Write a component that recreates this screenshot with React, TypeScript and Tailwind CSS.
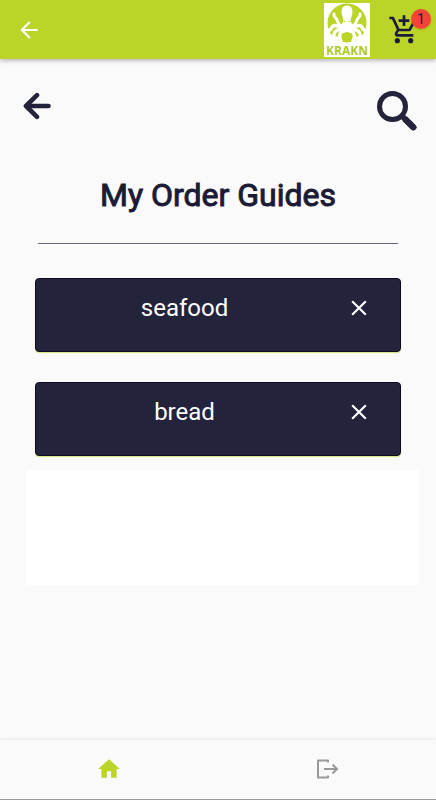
import { useState } from "react";
import { MdAddShoppingCart, MdArrowBack, MdClose, MdHome } from "react-icons/md";

const KraknLogo = () => (
  <div className="flex h-[54px] w-[46px] flex-col items-center bg-white">
    <svg viewBox="0 0 46 42" className="h-[42px] w-full" aria-hidden="true">
      <circle cx="23" cy="20" r="19.5" fill="#bbd427" />
      <g fill="none" stroke="#fff" strokeLinecap="round" strokeLinejoin="round">
        <path strokeWidth="3" d="M20 23C15 23 14 20 13 17C12 14 9 14 10 11" />
        <path strokeWidth="3" d="M26 23C31 23 32 20 33 17C34 14 37 14 36 11" />
        <path strokeWidth="3.4" d="M20 24C15 25 12 21 9 23C7 25 7 28 3 28" />
        <path strokeWidth="3.4" d="M26 24C31 25 34 21 37 23C39 25 39 28 43 28" />
        <path strokeWidth="3.4" d="M20 26C15 26 11 27 10 31C9 34 11 36 14 35" />
        <path strokeWidth="3.4" d="M26 26C31 26 35 27 36 31C37 34 35 36 32 35" />
        <path strokeWidth="3.4" d="M20 27C16 29 14 33 17 38" />
        <path strokeWidth="3.4" d="M26 27C30 29 32 33 29 38" />
      </g>
      <path
        fill="#fff"
        d="M23 2.500C19 2.500 17.500 5.500 17.500 9C17.500 12.500 19.500 15 19.500 18C18 21 16 24 17 30C19 31 21 29 23 29C25 29 27 31 29 30C30 24 28 21 26.500 18C26.500 15 28.500 12.500 28.500 9C28.500 5.500 27 2.500 23 2.500Z"
      />
      <circle cx="20.800" cy="18.500" r="0.800" fill="#bbd427" />
      <circle cx="25.200" cy="18.500" r="0.800" fill="#bbd427" />
    </svg>
    <span className="font-['Open_Sans',sans-serif] text-[12px] leading-[12px] font-bold text-[#b0ca24]">KRAKN</span>
  </div>
);

const BackIcon = () => (
  <svg viewBox="0 0 28 28" className="size-7" fill="none" stroke="#23233b" strokeWidth="4.6" strokeLinejoin="round" aria-hidden="true">
    <path strokeLinecap="round" d="M4 14H25.500" />
    <path strokeLinecap="round" d="M14 3.200L3 14L14 24.800" />
  </svg>
);

const SearchIcon = () => (
  <svg viewBox="0 0 40 40" className="size-10" fill="none" stroke="#23233b" aria-hidden="true">
    <circle cx="15.5" cy="15.5" r="13" strokeWidth="5" />
    <path d="M24 24L36.300 36.300" strokeWidth="5.500" />
    <path d="M29 29L36.300 36.300" strokeWidth="6.400" strokeLinecap="round" />
  </svg>
);

const LogoutIcon = () => (
  <svg viewBox="0 0 24 24" className="size-6" fill="none" stroke="currentColor" strokeWidth="2" aria-hidden="true">
    <path strokeLinejoin="round" d="M13 5.500V3.500H3V20.500H13V18.500" />
    <path d="M9 12H22M17.500 7.500L22 12L17.500 16.500" />
  </svg>
);

const App = () => {
  const [guides, setGuides] = useState(["seafood", "bread"]);

  const removeGuide = (name: string) => {
    setGuides(guides.filter((guide) => guide !== name));
  };

  return (
    <div className="flex min-h-screen flex-col bg-[#fafafa] font-[Roboto,sans-serif] text-[#23233b]">
      <header className="flex h-[59px] items-center bg-[#bbd427] px-4 shadow-[0_2px_4px_rgba(0,0,0,0.25)]">
        <button aria-label="Back" className="text-white">
          <MdArrowBack size={26} />
        </button>
        <div className="ml-auto">
          <KraknLogo />
        </div>
        <button aria-label="Cart" className="relative ml-[18px] text-[#1c1b3a]">
          <MdAddShoppingCart size={32} />
          <span className="absolute -top-[5px] -right-[11px] flex size-5 items-center justify-center rounded-full bg-[#f44336] text-sm text-[#1c1b3a] shadow">
            1
          </span>
        </button>
      </header>

      <main className="flex-1">
        <div className="flex items-start justify-between pt-8 pr-[19px] pl-[23px]">
          <button aria-label="Previous page" className="pt-px">
            <BackIcon />
          </button>
          <button aria-label="Search">
            <SearchIcon />
          </button>
        </div>

        <h1 className="mt-11 text-center text-[32px] leading-10 font-normal text-[#1c1b35] [-webkit-text-stroke:1px_#1c1b35]">
          My Order Guides
        </h1>
        <hr className="mx-[38px] mt-7 border-[#66667a]" />

        <ul className="mx-[35px] mt-[34px] flex flex-col gap-[30px]">
          {guides.map((guide) => (
            <li
              key={guide}
              className="flex h-[74px] items-start rounded border border-[#0c0c26] bg-[#23233b] pt-[11px] pr-[15px] text-white shadow-[0_1px_1px_#bbd42799]"
            >
              <span className="flex-1 text-center text-2xl leading-9">{guide}</span>
              <button
                aria-label={`Remove ${guide}`}
                className="flex h-9 w-[52px] items-center justify-center"
                onClick={() => removeGuide(guide)}
              >
                <MdClose size={26} />
              </button>
            </li>
          ))}
        </ul>

        <div className="mt-[14px] mr-[17px] ml-[26px] h-[115px] bg-white" />
      </main>

      <nav className="flex h-[60px] items-center border-b border-[#999] bg-[#fafafa] pb-[2px] shadow-[0_-1px_3px_rgba(0,0,0,0.08)]">
        <a href="#home" aria-label="Home" className="flex flex-1 justify-center text-[#bbd427]">
          <MdHome size={26} />
        </a>
        <a href="#logout" aria-label="Log out" className="flex flex-1 justify-center text-[#999]">
          <LogoutIcon />
        </a>
      </nav>
    </div>
  );
};

export default App;
